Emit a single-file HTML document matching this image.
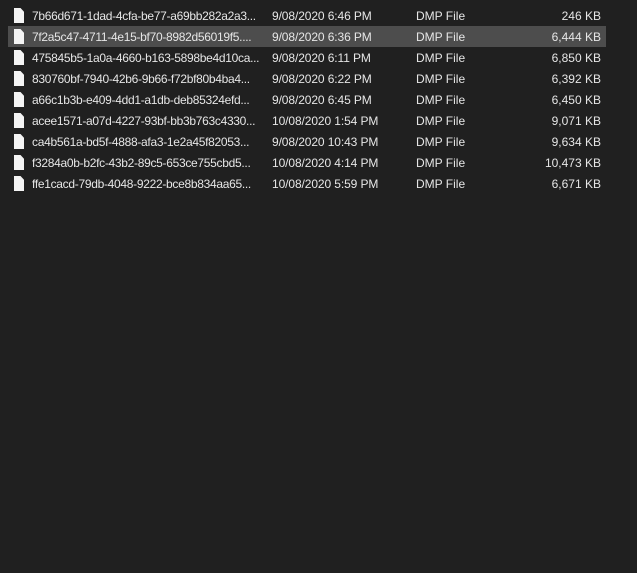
<!DOCTYPE html>
<html><head><style>
body{margin:0;background:#202020;width:637px;height:573px;overflow:hidden;font-family:"Liberation Sans",sans-serif;font-size:12px;color:#e6e6e6}
.r{position:absolute;left:8px;width:598px;height:21px;line-height:22px}
.r.s{background:#4d4d4d}
.r span{position:absolute;white-space:nowrap}
.n{left:24px;letter-spacing:-0.3px}.d{left:264px;letter-spacing:-0.1px}.t{left:408px}.z{right:5px}
.i{position:absolute;left:6px;top:3px;width:10px;height:15px;background:#f4f4f4;clip-path:polygon(0 0,65% 0,100% 25%,100% 100%,0 100%)}
</style></head><body>
<div class="r" style="top:5px"><div class="i"></div><span class="n">7b66d671-1dad-4cfa-be77-a69bb282a2a3...</span><span class="d">9/08/2020 6:46 PM</span><span class="t">DMP File</span><span class="z">246 KB</span></div>
<div class="r s" style="top:26px"><div class="i"></div><span class="n">7f2a5c47-4711-4e15-bf70-8982d56019f5....</span><span class="d">9/08/2020 6:36 PM</span><span class="t">DMP File</span><span class="z">6,444 KB</span></div>
<div class="r" style="top:47px"><div class="i"></div><span class="n">475845b5-1a0a-4660-b163-5898be4d10ca...</span><span class="d">9/08/2020 6:11 PM</span><span class="t">DMP File</span><span class="z">6,850 KB</span></div>
<div class="r" style="top:68px"><div class="i"></div><span class="n">830760bf-7940-42b6-9b66-f72bf80b4ba4...</span><span class="d">9/08/2020 6:22 PM</span><span class="t">DMP File</span><span class="z">6,392 KB</span></div>
<div class="r" style="top:89px"><div class="i"></div><span class="n">a66c1b3b-e409-4dd1-a1db-deb85324efd...</span><span class="d">9/08/2020 6:45 PM</span><span class="t">DMP File</span><span class="z">6,450 KB</span></div>
<div class="r" style="top:110px"><div class="i"></div><span class="n">acee1571-a07d-4227-93bf-bb3b763c4330...</span><span class="d">10/08/2020 1:54 PM</span><span class="t">DMP File</span><span class="z">9,071 KB</span></div>
<div class="r" style="top:131px"><div class="i"></div><span class="n">ca4b561a-bd5f-4888-afa3-1e2a45f82053...</span><span class="d">9/08/2020 10:43 PM</span><span class="t">DMP File</span><span class="z">9,634 KB</span></div>
<div class="r" style="top:152px"><div class="i"></div><span class="n">f3284a0b-b2fc-43b2-89c5-653ce755cbd5...</span><span class="d">10/08/2020 4:14 PM</span><span class="t">DMP File</span><span class="z">10,473 KB</span></div>
<div class="r" style="top:173px"><div class="i"></div><span class="n">ffe1cacd-79db-4048-9222-bce8b834aa65...</span><span class="d">10/08/2020 5:59 PM</span><span class="t">DMP File</span><span class="z">6,671 KB</span></div>
</body></html>
